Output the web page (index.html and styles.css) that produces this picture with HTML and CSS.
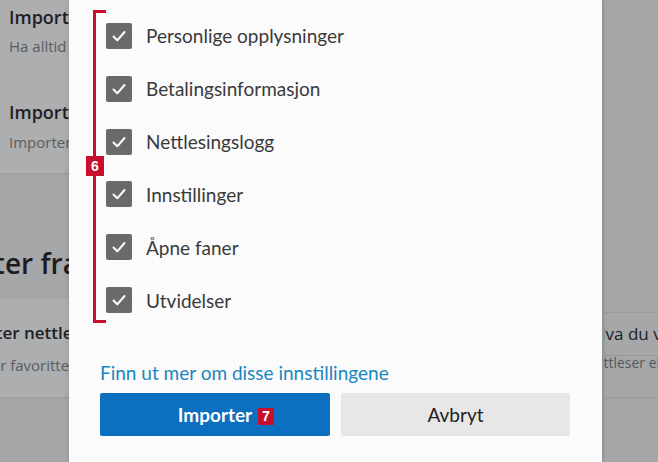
FILE: index.html
```html
<!DOCTYPE html>
<html lang="no">
<head>
  <meta charset="UTF-8" />
  <title>Importer nettleserdata</title>
  <link rel="stylesheet" href="styles.css">
</head>
<body>
  <div class="page">
    <div class="left-col">
      <div class="card top-card">
        <div class="item">
          <div class="item-title">Importer favoritter</div>
          <div class="item-sub">Ha alltid favorittene dine tilgjengelig</div>
        </div>
        <div class="item">
          <div class="item-title">Importer data</div>
          <div class="item-sub">Importer fra en annen nettleser</div>
        </div>
      </div>
      <h2 class="section-title">Importer fra</h2>
      <div class="card bottom-card">
        <div class="item">
          <div class="item-title">Importer nettleserdata</div>
          <div class="item-sub">Importer favoritter, passord og mer</div>
        </div>
      </div>
    </div>
    <div class="right-col">
      <div class="right-box">
        <div class="right-title">Hva du vil importere</div>
        <div class="right-sub">Nettleser eller fil</div>
      </div>
    </div>
  </div>

  <div class="dialog">
    <ul class="options">
      <li class="option"><span class="check"><svg viewBox="0 0 26 26"><path d="M7.5 13.5l3.8 3.8 7.2-8.3" /></svg></span>Personlige opplysninger</li>
      <li class="option"><span class="check"><svg viewBox="0 0 26 26"><path d="M7.5 13.5l3.8 3.8 7.2-8.3" /></svg></span>Betalingsinformasjon</li>
      <li class="option"><span class="check"><svg viewBox="0 0 26 26"><path d="M7.5 13.5l3.8 3.8 7.2-8.3" /></svg></span>Nettlesingslogg</li>
      <li class="option"><span class="check"><svg viewBox="0 0 26 26"><path d="M7.5 13.5l3.8 3.8 7.2-8.3" /></svg></span>Innstillinger</li>
      <li class="option"><span class="check"><svg viewBox="0 0 26 26"><path d="M7.5 13.5l3.8 3.8 7.2-8.3" /></svg></span>Åpne faner</li>
      <li class="option"><span class="check"><svg viewBox="0 0 26 26"><path d="M7.5 13.5l3.8 3.8 7.2-8.3" /></svg></span>Utvidelser</li>
      <span class="badge badge-6">6</span>
    </ul>
    <a class="learn-link" href="#">Finn ut mer om disse innstillingene</a>
    <div class="buttons">
      <button class="btn btn-primary">Importer<span class="badge badge-7">7</span></button>
      <button class="btn btn-secondary">Avbryt</button>
    </div>
  </div>
</body>
</html>
```

FILE: styles.css
```css
* {
  margin: 0;
  padding: 0;
  box-sizing: border-box;
}

body {
  width: 658px;
  height: 462px;
  overflow: hidden;
  background-color: #a5a7a9;
  font-family: 'Lato', 'Liberation Sans', sans-serif;
  position: relative;
}

/* background page (dimmed) */
.page {
  display: flex;
  height: 462px;
  font-family: 'Open Sans', 'Liberation Sans', sans-serif;
}

.left-col {
  width: 69px;
  overflow: hidden;
  flex-shrink: 0;
}

.card {
  background-color: #acaeb0;
  border-bottom: 2px solid #9fa1a3;
}

.top-card {
  height: 175px;
  padding-top: 4px;
}

.item {
  padding-left: 9px;
  white-space: nowrap;
}

.top-card .item {
  height: 95px;
}

.item-title {
  font-size: 18px;
  font-weight: 600;
  color: #1e1e24;
  line-height: 26px;
}

.item-sub {
  margin-top: 6px;
  font-size: 15px;
  color: #5a5d61;
  line-height: 20px;
}

.top-card .item + .item .item-sub {
  margin-top: 7px;
}

.section-title {
  margin: 68px 0 0 -88px;
  font-size: 28px;
  font-weight: 600;
  color: #1c1c20;
  white-space: nowrap;
  line-height: 40px;
}

.bottom-card {
  margin-top: 14px;
  height: 102px;
  border-top: 1px solid #9fa1a3;
  padding-top: 22px;
}

.bottom-card .item {
  margin-left: -63px;
}

.bottom-card .item-title {
  font-size: 17px;
}

.bottom-card .item-sub {
  margin-top: 9px;
  margin-left: -2px;
}

.right-col {
  margin-left: 533px;
  flex: 1;
  overflow: hidden;
  border-left: 2px solid #9c9ea0;
}

.right-box {
  margin-top: 312px;
  height: 87px;
  border-top: 1px solid #97999b;
  border-bottom: 2px solid #9c9ea0;
  white-space: nowrap;
}

.right-title {
  margin-left: -11px;
  padding-top: 9px;
  height: 43px;
  font-size: 17px;
  color: #1e1e24;
  border-bottom: 1px solid #96989a;
}

.right-sub {
  margin-left: -19px;
  margin-top: -3px;
  font-size: 14px;
  color: #55585c;
}

/* dialog on top */
.dialog {
  position: absolute;
  left: 69px;
  top: 0;
  width: 533px;
  height: 462px;
  background-color: #fbfbfb;
  padding: 10px 0 0 31px;
  box-shadow: 0 0 6px rgba(0, 0, 0, 0.15);
}

.options {
  list-style: none;
  position: relative;
  margin-left: -7px;
  padding: 3px 0 0 13px;
  height: 313px;
  display: flex;
  flex-direction: column;
  gap: 7px;
}

/* red bracket marking the list */
.options::before {
  content: "";
  position: absolute;
  left: 0;
  top: 0;
  bottom: 0;
  width: 10px;
  border: 3px solid #c8102e;
  border-right: none;
}

.option {
  height: 46px;
  display: flex;
  align-items: center;
  gap: 14px;
  font-size: 19px;
  color: #3a3a3a;
}

.check {
  width: 26px;
  height: 26px;
  border-radius: 2px;
  background-color: #6a6a6a;
  display: flex;
}

.check svg {
  width: 26px;
  height: 26px;
  fill: none;
  stroke: #fff;
  stroke-width: 2;
  stroke-linecap: round;
  stroke-linejoin: round;
}

.badge {
  display: inline-block;
  background-color: #c8102e;
  color: #fff;
  font-family: 'Liberation Sans', sans-serif;
  font-weight: bold;
  font-size: 14px;
  text-align: center;
}

.badge-6 {
  position: absolute;
  left: -7px;
  top: 146px;
  width: 18px;
  height: 20px;
  line-height: 20px;
}

.learn-link {
  display: block;
  margin-top: 38px;
  font-size: 19px;
  color: #1a86c0;
  text-decoration: none;
  line-height: 24px;
}

.buttons {
  display: flex;
  gap: 11px;
  margin-top: 8px;
}

.btn {
  height: 43px;
  border: none;
  border-radius: 2px;
  font-family: 'Lato', 'Liberation Sans', sans-serif;
  font-size: 19px;
  position: relative;
}

.btn-primary {
  width: 230px;
  background-color: #0c6fbf;
  color: #fff;
  font-weight: bold;
}

.badge-7 {
  position: absolute;
  left: 158px;
  top: 15px;
  width: 16px;
  height: 17px;
  line-height: 17px;
}

.btn-secondary {
  width: 229px;
  background-color: #e7e7e7;
  color: #222;
}
```
